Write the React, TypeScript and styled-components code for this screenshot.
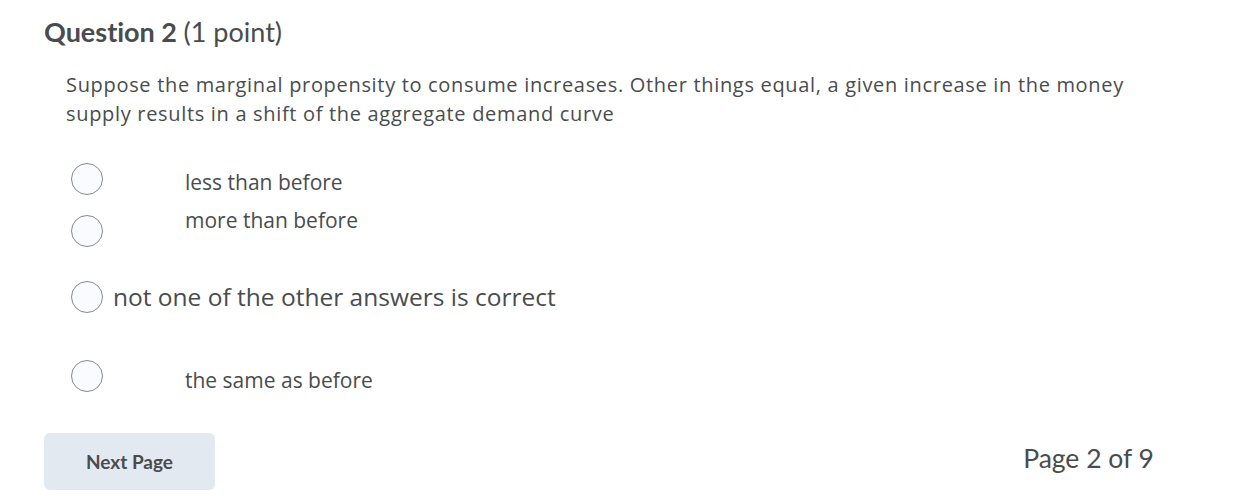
import React from 'react';
import styled, { createGlobalStyle } from 'styled-components';

const colours = {
  ferrite: '#494c4e',
  radioBorder: '#868c8f',
  radioFill: '#f9fbff',
  buttonBg: '#e3e9f1',
};

const GlobalStyle = createGlobalStyle`
  body {
    margin: 0;
    background: #ffffff;
    color: ${colours.ferrite};
    font-variant-ligatures: none;
  }
`;

const Page = styled.div`
  width: 1233px;
  height: 501px;
  box-sizing: border-box;
  padding: 15px 0 0 44px;
  display: flex;
  flex-direction: column;
`;

const Heading = styled.h2`
  margin: 0;
  font-family: Lato, 'Liberation Sans', sans-serif;
  font-size: 27px;
  line-height: 34px;
  font-weight: 700;
  color: ${colours.ferrite};
`;

const Points = styled.span`
  font-weight: 400;
`;

const QuestionText = styled.p`
  margin: 21px 0 0 22px;
  width: 1080px;
  font-family: 'Open Sans', 'Noto Sans', sans-serif;
  font-size: 20px;
  letter-spacing: 0.68px;
  line-height: 29px;
  color: ${colours.ferrite};
`;

const Options = styled.div`
  margin: 35px 0 0 27px;
  display: flex;
  flex-direction: column;
`;

const Option = styled.label<{ height: number }>`
  display: grid;
  grid-template-columns: 32px 1fr;
  column-gap: 10px;
  align-items: start;
  height: ${props => props.height}px;
  cursor: pointer;
`;

const Radio = styled.span<{ offset: number }>`
  box-sizing: border-box;
  width: 32px;
  height: 32px;
  margin-top: ${props => props.offset}px;
  border-radius: 50%;
  border: 1px solid ${colours.radioBorder};
  background: ${colours.radioFill};
`;

const OptionText = styled.span<{ large?: boolean; offset: number }>`
  margin-top: ${props => props.offset}px;
  padding-left: ${props => (props.large ? 0 : 72)}px;
  font-family: 'Open Sans', 'Noto Sans', sans-serif;
  font-size: ${props => (props.large ? 24.5 : 21)}px;
  line-height: ${props => (props.large ? 32 : 28)}px;
  color: ${colours.ferrite};
`;

const Footer = styled.div`
  margin-top: 41px;
  width: 1110px;
  display: flex;
  align-items: center;
  justify-content: space-between;
`;

const NextButton = styled.button`
  width: 171px;
  height: 57px;
  padding: 0;
  border: none;
  border-radius: 6px;
  background: ${colours.buttonBg};
  font-family: Lato, 'Liberation Sans', sans-serif;
  font-size: 19px;
  font-weight: 700;
  color: ${colours.ferrite};
  cursor: pointer;
`;

const PageCount = styled.span`
  margin-bottom: 7px;
  font-family: Lato, 'Liberation Sans', sans-serif;
  font-size: 26.5px;
  color: ${colours.ferrite};
`;

const answers = [
  { text: 'less than before', height: 38, radioTop: 0, textTop: 5 },
  { text: 'more than before', height: 80, radioTop: 14, textTop: 5 },
  { text: 'not one of the other answers is correct', height: 79, radioTop: 0, textTop: 0, large: true },
  { text: 'the same as before', height: 32, radioTop: 0, textTop: 6 },
];

const App = () => {
  return (
    <Page>
      <GlobalStyle />
      <Heading>
        Question 2 <Points>(1 point)</Points>
      </Heading>
      <QuestionText>
        Suppose the marginal propensity to consume increases. Other things equal, a given increase in the money
        supply results in a shift of the aggregate demand curve
      </QuestionText>
      <Options>
        {answers.map(answer => (
          <Option key={answer.text} height={answer.height}>
            <Radio offset={answer.radioTop} />
            <OptionText large={answer.large} offset={answer.textTop}>
              {answer.text}
            </OptionText>
          </Option>
        ))}
      </Options>
      <Footer>
        <NextButton>Next Page</NextButton>
        <PageCount>Page 2 of 9</PageCount>
      </Footer>
    </Page>
  );
};

export default App;
